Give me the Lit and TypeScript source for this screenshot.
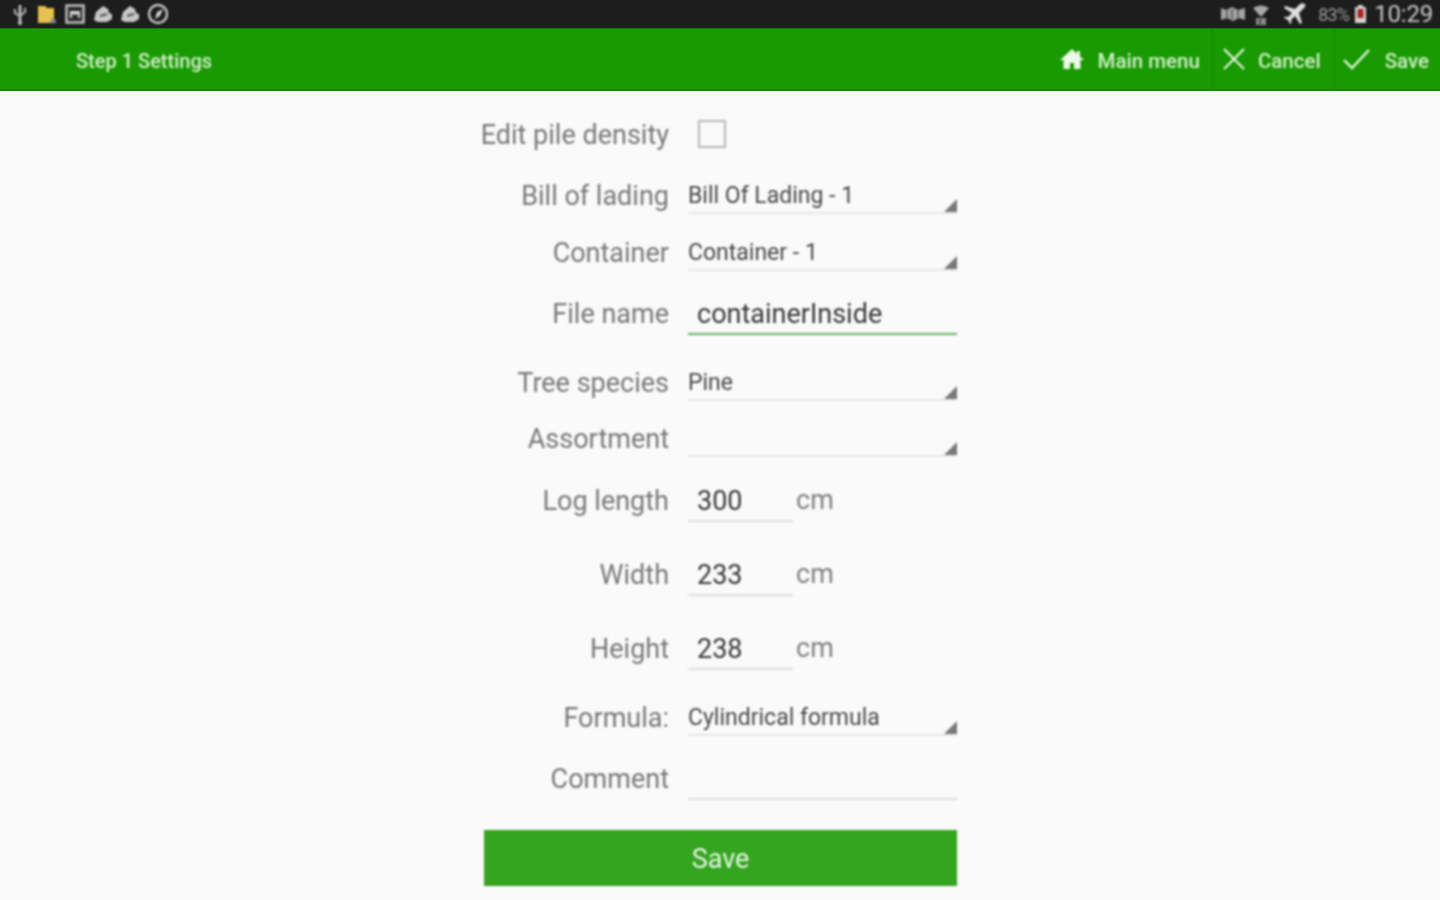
import { LitElement, html, css, svg } from "lit";
import { customElement } from "lit/decorators.js";

type Row = { label: string; kind: "check" | "spin" | "edit" | "num"; value?: string; gap: number };

const rows: Row[] = [
  { label: "Edit pile density", kind: "check", gap: 21 },
  { label: "Bill of lading", kind: "spin", value: "Bill Of Lading - 1", gap: 17 },
  { label: "Container", kind: "spin", value: "Container - 1", gap: 13 },
  { label: "File name", kind: "edit", value: "containerInside", gap: 17 },
  { label: "Tree species", kind: "spin", value: "Pine", gap: 25 },
  { label: "Assortment", kind: "spin", value: "", gap: 12 },
  { label: "Log length", kind: "num", value: "300", gap: 18 },
  { label: "Width", kind: "num", value: "233", gap: 30 },
  { label: "Height", kind: "num", value: "238", gap: 30 },
  { label: "Formula:", kind: "spin", value: "Cylindrical formula", gap: 25 },
  { label: "Comment", kind: "edit", value: "", gap: 17 },
];

const i = (w: number, h: number, body: unknown) =>
  html`<svg width=${w} height=${h} viewBox="0 0 ${w} ${h}">${body}</svg>`;

@customElement("app-root")
export class AppRoot extends LitElement {
  static styles = css`
    :host {
      display: block;
      width: 1440px;
      height: 900px;
      overflow: hidden;
      background: #fafafa;
      font-family: Roboto, "Liberation Sans", sans-serif;
    }
    .status > *, .bar > *, .form { filter: blur(0.8px); }
    .status {
      height: 28px;
      background: #1d1d1d;
      display: flex;
      align-items: center;
      justify-content: space-between;
      padding: 0 7px 0 11px;
    }
    .group { display: flex; align-items: center; }
    .left { gap: 8px; }
    .status svg { display: block; filter: blur(0.6px); }
    .right { color: #c4c4c4; }
    .s-noise { margin-right: 6px; }
    .s-wifi { margin-right: 14px; }
    .pct { font-size: 18px; letter-spacing: -0.8px; margin: 0 5px 0 10px; color: #9c9c9c; }
    .time { font-size: 24px; margin-left: 7px; color: #c8c8c8; letter-spacing: -0.2px; }
    .bar {
      height: 60px;
      box-sizing: content-box;
      background: #189a00;
      border-top: 1px solid #117a00;
      border-bottom: 2px solid #128a00;
      display: flex;
      align-items: center;
      justify-content: space-between;
      padding-left: 76px;
      color: #d4eecb;
      font-size: 20px;
      font-weight: 500;
    }
    .bar span { padding-top: 3px; }
    .actions { display: flex; height: 100%; font-size: 20.5px; }
    .action { display: flex; align-items: center; height: 100%; }
    .home { padding-right: 12px; gap: 14px; }
    .cancel { border-left: 1px solid #138400; padding: 0 13px 0 10px; gap: 13px; }
    .save { border-left: 1px solid #138400; padding: 0 11px 0 8px; gap: 15px; }
    .form { width: 473px; margin-left: 484px; }
    .row {
      height: 44px;
      display: grid;
      grid-template-columns: 185px 269px;
      grid-auto-rows: 44px;
      column-gap: 19px;
      align-items: center;
    }
    .label {
      display: flex;
      justify-content: flex-end;
      align-items: flex-start;
      height: 44px;
      font-size: 27px;
      color: #787878;
      white-space: nowrap;
      line-height: 46px;
    }
    .box {
      width: 28px;
      height: 28px;
      box-sizing: border-box;
      border: 2px solid #b8b8b8;
      margin-left: 10px;
    }
    .spin {
      position: relative;
      height: 37px;
      box-sizing: border-box;
      border-bottom: 2px solid #e8e8e8;
      font-size: 23px;
      line-height: 38px;
      color: #484848;
      white-space: nowrap;
      margin-top: 1px;
    }
    .spin svg { position: absolute; right: 0; bottom: 0; display: block; }
    .edit {
      height: 42px;
      box-sizing: border-box;
      border-bottom: 2px solid #dedede;
      padding-left: 9px;
      font-size: 27px;
      line-height: 42px;
      color: #383838;
      white-space: nowrap;
      margin-top: 2px;
    }
    .active { border-bottom-color: #66b264; }
    .num-wrap { display: flex; align-items: flex-start; height: 44px; }
    .num { width: 105px; flex: none; }
    .unit { font-size: 27px; line-height: 44px; color: #808080; margin-left: 3px; }
    .btn {
      margin-top: 30px;
      height: 56px;
      background: #34a51f;
      color: #e8f6e4;
      font-size: 27px;
      display: flex;
      align-items: center;
      justify-content: center;
      padding-top: 1px;
      box-sizing: border-box;
    }
  `;

  private statusLeft() {
    const cloud = svg`<path d="M1 17l2-8 7-6 5 3 1 4 3 1v5l-5 3H5z" fill="#c8c8c8"/><path d="M7 13l7-2" stroke="#666" stroke-width="2.4"/>`;
    return html`
      <div class="group left">
        ${i(18, 24, svg`<path d="M9 3v18" fill="none" stroke="#c8c8c8" stroke-width="2.6"/><path d="M4 7v4l5 3M14 6v4l-5 4" fill="none" stroke="#aaa" stroke-width="2.2"/><circle cx="9" cy="21" r="2" fill="#c4c4c4"/>`)}
        ${i(20, 22, svg`<path d="M1 3h7l2 2h7v11l2 4H1z" fill="#e8c24e"/><circle cx="16" cy="18" r="2.6" fill="#7f8c96"/>`)}
        ${i(20, 22, svg`<rect x="1.5" y="2.5" width="17" height="17" fill="#2a2a2a" stroke="#c4c4c4" stroke-width="2.4"/><path d="M5 15V8h10v7h-2v-4l-3 1-3-1v4z" fill="#d4d4d4"/>`)}
        ${i(19, 22, cloud)}
        ${i(19, 22, cloud)}
        ${i(22, 22, svg`<circle cx="11" cy="11" r="9" fill="none" stroke="#c8c8c8" stroke-width="2.4"/><path d="M16 6l-3 7-5 3 2-7z" fill="#d0d0d0"/>`)}
      </div>`;
  }

  private statusRight() {
    return html`
      <div class="group right">
        <span class="s-noise">${i(26, 20, svg`<path d="M1 4l5 2 6-3 6 3 7-2v12l-6-2-6 3-6-3-6 2z" fill="#a4a4a4"/><path d="M7 6v9M12 5v10M18 6v9" stroke="#555" stroke-width="1.5"/>`)}</span>
        <span class="s-wifi">${i(18, 24, svg`<path d="M1 6q8-5 16 0l-8 9z" fill="#a8a8a8"/><path d="M4 16h10v7H4z" fill="#8a8a8a"/><path d="M8 17v5" stroke="#333" stroke-width="1.5"/>`)}</span>
        ${i(24, 24, svg`<path d="M21 2c1 1 0 3-2 5l-4 4 3 10-2 1-5-8-4 4 .5 3-1.5 1-2-4-4-2 1-1.5 3 .5 4-4-8-5 1-2 10 3 4-4c2-2 4-2 5-1z" fill="#dedede"/>`)}
        <span class="pct">83%</span>
        ${i(13, 22, svg`<rect x="1" y="4" width="11" height="16" fill="#d4d4d4"/><rect x="4" y="2" width="5" height="2" fill="#d4d4d4"/><rect x="3.5" y="6" width="6" height="9" fill="#b02020"/>`)}
        <span class="time">10:29</span>
      </div>`;
  }

  private control(r: Row) {
    if (r.kind === "check") return html`<div><div class="box"></div></div>`;
    if (r.kind === "spin")
      return html`<div class="spin">${r.value}
        ${i(13, 13, svg`<path d="M13 0v13H0z" fill="#787878"/>`)}</div>`;
    if (r.kind === "num")
      return html`<div class="num-wrap"><div class="edit num">${r.value}</div><span class="unit">cm</span></div>`;
    const active = r.label === "File name" ? "active" : "";
    return html`<div class="edit ${active}">${r.value}</div>`;
  }

  render() {
    return html`
      <div class="page">
        <div class="status">${this.statusLeft()}${this.statusRight()}</div>
        <div class="bar">
          <span>Step 1 Settings</span>
          <div class="actions">
            <div class="action home">
              ${i(24, 22, svg`<path d="M12 1L0 12h3.5v9H10v-6h4v6h6.5v-9H24l-4-3.6V3h-3v2.7z" fill="#eef8ea"/>`)}
              <span>Main menu</span>
            </div>
            <div class="action cancel">
              ${i(22, 22, svg`<path d="M1 1l20 20M21 1L1 21" stroke="#e4f4de" stroke-width="2.2" fill="none"/>`)}
              <span>Cancel</span>
            </div>
            <div class="action save">
              ${i(27, 22, svg`<path d="M1 12l8 8L26 2" stroke="#e4f4de" stroke-width="2.4" fill="none"/>`)}
              <span>Save</span>
            </div>
          </div>
        </div>
        <div class="form">
          ${rows.map(
            (r) => html`<div class="row" style="margin-top:${r.gap}px">
              <div class="label"><span>${r.label}</span></div>
              ${this.control(r)}
            </div>`
          )}
          <div class="btn">Save</div>
        </div>
      </div>
    `;
  }
}
